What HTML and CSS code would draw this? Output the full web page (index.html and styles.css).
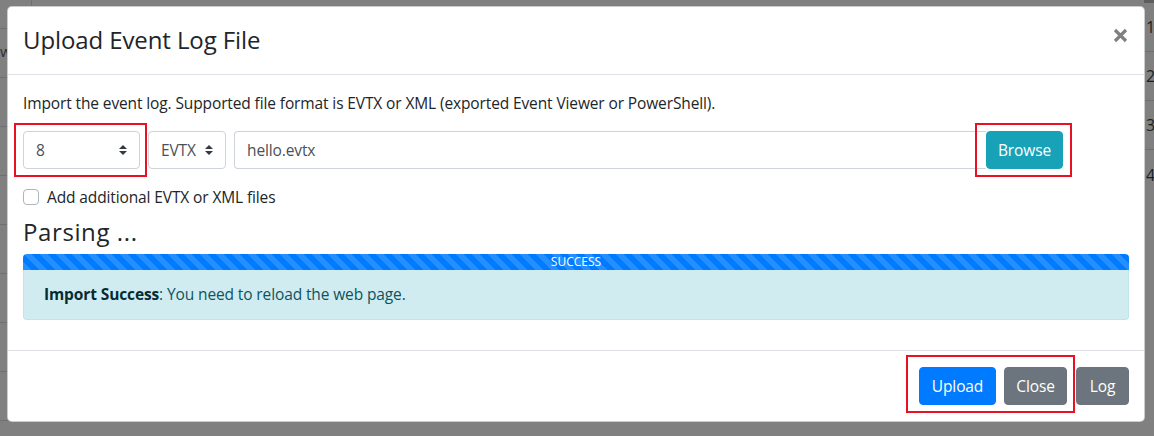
FILE: index.html
```html
<!DOCTYPE html>
<html lang="en">
<head>
<meta charset="utf-8">
<title>Upload Event Log File</title>
<link rel="stylesheet" href="styles.css">
</head>
<body>
<div class="page">
  <div class="bg-left">
    <div class="bg-row first"></div>
    <div class="bg-row"><span class="bg-w">w</span></div>
    <div class="bg-row"></div>
    <div class="bg-row"></div>
    <div class="bg-row"></div>
    <div class="bg-row"></div>
    <div class="bg-row"></div>
    <div class="bg-row"></div>
    <div class="bg-row"></div>
  </div>
  <div class="bg-mid"></div>
  <div class="bg-right">
    <div class="bg-num">1</div>
    <div class="bg-num">2</div>
    <div class="bg-num">3</div>
    <div class="bg-num last">4</div>
  </div>
</div>

<div class="modal">
  <div class="modal-header">
    <h5 class="modal-title">Upload Event Log File</h5>
    <span class="close" aria-label="Close">
      <svg width="15" height="15" viewBox="0 0 15 15"><path d="M2 2 L13 13 M13 2 L2 13" stroke="#808080" stroke-width="3.2" stroke-linecap="butt" fill="none"/></svg>
    </span>
  </div>
  <div class="modal-body">
    <p class="intro">Import the event log. Supported file format is EVTX or XML (exported Event Viewer or PowerShell).</p>
    <div class="file-row">
      <div class="marked mark-select">
        <div class="select select-num">
          <span>8</span>
          <svg class="updown" width="8" height="10" viewBox="0 0 8 10"><path d="M4 0 L8 4 H0 Z M4 10 L0 6 H8 Z" fill="#343a40"/></svg>
        </div>
      </div>
      <div class="select select-type">
        <span>EVTX</span>
        <svg class="updown" width="8" height="10" viewBox="0 0 8 10"><path d="M4 0 L8 4 H0 Z M4 10 L0 6 H8 Z" fill="#343a40"/></svg>
      </div>
      <div class="input-group">
        <div class="file-input">hello.evtx</div>
        <div class="marked mark-browse">
          <span class="btn btn-info">Browse</span>
        </div>
      </div>
    </div>
    <label class="check">
      <span class="check-box"></span>
      <span>Add additional EVTX or XML files</span>
    </label>
    <h4 class="parsing">Parsing ...</h4>
    <div class="progress">
      <div class="progress-bar">SUCCESS</div>
    </div>
    <div class="alert"><strong>Import Success</strong>: You need to reload the web page.</div>
  </div>
  <div class="modal-footer">
    <div class="marked mark-footer">
      <span class="btn btn-primary">Upload</span>
      <span class="btn btn-secondary">Close</span>
    </div>
    <span class="btn btn-secondary">Log</span>
  </div>
</div>
</body>
</html>
```

FILE: styles.css
```css
* { box-sizing: border-box; }
html, body { margin: 0; padding: 0; }
body {
  width: 1154px;
  height: 436px;
  overflow: hidden;
  background: #808080;
  font-family: "Open Sans", "Noto Sans", sans-serif;
  color: #212529;
  position: relative;
}
.page {
  display: flex;
  height: 436px;
}
.bg-left {
  width: 32px;
  display: flex;
  flex-direction: column;
}
.bg-row {
  height: 49px;
  border-bottom: 1px solid #6f6f6f;
  position: relative;
  flex: none;
}
.bg-row.first { height: 29px; border-right: 1px solid #6f6f6f; }
.bg-w {
  position: absolute;
  left: 0;
  top: 13px;
  font-size: 15px;
  line-height: 18px;
  color: #2a2f3a;
}
.bg-mid { flex: 1; }
.bg-right {
  width: 10px;
  display: flex;
  flex-direction: column;
  border-top: 3px solid #5e5e5e;
}
.bg-num {
  height: 49px;
  flex: none;
  border-bottom: 1px solid #6f6f6f;
  font-size: 16px;
  color: #1e1e1e;
  display: flex;
  align-items: center;
  padding-left: 2px;
  line-height: 20px;
}
.bg-num.last { border-bottom: none; }

.modal {
  position: absolute;
  left: 7px;
  top: 6px;
  width: 1138px;
  height: 416px;
  background: #fff;
  border: 1px solid rgba(0,0,0,.2);
  border-radius: 5px;
  display: flex;
  flex-direction: column;
  font-size: 15.5px;
  letter-spacing: -0.12px;
}
.modal-header {
  display: flex;
  justify-content: space-between;
  align-items: flex-start;
  padding: 15px 16px 16px 15px;
  border-bottom: 1px solid #dee2e6;
  height: 68px;
}
.modal-title {
  margin: 0;
  font-size: 24px;
  line-height: 36px;
  font-weight: 500;
  letter-spacing: -0.1px;
  color: #212529;
}
.close {
  display: flex;
  padding-top: 6px;
}
.modal-body {
  padding: 16px 15px;
  flex: 1;
}
.intro {
  margin: 0 0 16px;
  line-height: 24px;
}
.file-row {
  display: flex;
  gap: 8px;
  height: 38px;
}
.marked { position: relative; }
.marked::after {
  content: "";
  position: absolute;
  border: 2px solid #e81123;
  pointer-events: none;
}
.mark-select::after { left: -9px; right: -7px; top: -8px; bottom: -8px; }
.mark-browse::after { left: -11px; right: -9px; top: -8px; bottom: -8px; }
.mark-footer::after { left: -13px; right: -8px; top: -12px; bottom: -8px; }

.select {
  height: 38px;
  border: 1px solid #ced4da;
  border-radius: 4px;
  padding: 6px 12px;
  display: flex;
  align-items: center;
  justify-content: space-between;
  line-height: 24px;
  color: #495057;
}
.select-num { width: 117px; }
.select-type { width: 78px; }
.input-group {
  width: 829px;
  flex: none;
  display: flex;
}
.file-input {
  flex: 1;
  height: 38px;
  border: 1px solid #ced4da;
  border-right: none;
  border-radius: 4px 0 0 4px;
  padding: 6px 12px;
  line-height: 24px;
  color: #495057;
}
.btn {
  display: inline-block;
  height: 38px;
  padding: 6px 0;
  line-height: 24px;
  border-radius: 4px;
  color: #fff;
  border: 1px solid transparent;
  text-align: center;
}
.btn-info { background: #17a2b8; border-color: #17a2b8; width: 77px; }
.btn-primary { background: #007bff; border-color: #007bff; width: 77px; }
.btn-secondary { background: #6c757d; border-color: #6c757d; }
.mark-footer { display: flex; gap: 8px; }
.mark-footer .btn-secondary { width: 63px; }
.modal-footer > .btn-secondary { width: 53px; }

.check {
  display: flex;
  align-items: center;
  gap: 8px;
  margin-top: 16px;
  line-height: 24px;
  height: 24px;
}
.check-box {
  width: 16px;
  height: 16px;
  border: 1px solid #adb5bd;
  border-radius: 4px;
  background: #fff;
}
.parsing {
  margin: 8px 0 8px;
  font-size: 24px;
  line-height: 29px;
  font-weight: 500;
  letter-spacing: 0.6px;
}
.progress {
  height: 16px;
  background: #e9ecef;
  border-radius: 4px 4px 0 0;
  overflow: hidden;
}
.progress-bar {
  height: 16px;
  background-color: #007bff;
  background-image: linear-gradient(45deg, rgba(255,255,255,.15) 25%, transparent 25%, transparent 50%, rgba(255,255,255,.15) 50%, rgba(255,255,255,.15) 75%, transparent 75%, transparent);
  background-size: 16px 16px;
  color: #fff;
  font-size: 12px;
  letter-spacing: 0;
  line-height: 16px;
  text-align: center;
}
.alert {
  height: 50px;
  padding: 12px 20px;
  background: #d1ecf1;
  border: 1px solid #bee5eb;
  border-top: none;
  border-radius: 0 0 4px 4px;
  color: #0c5460;
  line-height: 24px;
}
.alert strong { color: #062c33; font-weight: 700; }
.modal-footer {
  border-top: 1px solid #dee2e6;
  padding: 16px 15px 16px;
  display: flex;
  justify-content: flex-end;
  gap: 9px;
  height: 71px;
}
```
